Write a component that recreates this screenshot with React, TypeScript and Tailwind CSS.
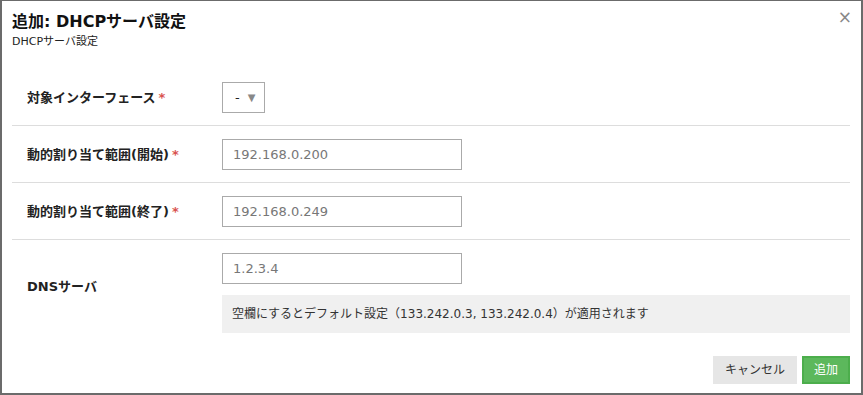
import React from 'react';

const font = { fontFamily: '"DejaVu Sans", "Noto Sans CJK JP", sans-serif' };

const Req = () => <span className="ml-[3px] text-[#d9534f]">*</span>;

const Row: React.FC<{ label: React.ReactNode; children: React.ReactNode; last?: boolean }> = ({ label, children, last }) => (
  <div className={`flex items-center pt-[13px] pb-[12px] pl-[15px] ${last ? '' : 'border-b border-[#dddddd]'}`}>
    <div className={`w-[195px] shrink-0 text-[13px] font-bold text-[#222] ${last ? 'mb-[12px]' : ''}`}>{label}</div>
    <div className="flex-1">{children}</div>
  </div>
);

const TextBox: React.FC<{ value: string }> = ({ value }) => (
  <div className="flex h-[31px] w-[240px] items-center border border-[#aaaaaa] bg-white px-[10px] text-[13px] text-[#777]">
    {value}
  </div>
);

export default function App() {
  return (
    <div className="h-[395px] w-[863px] border-2 border-t border-[#6b6b6b] bg-white" style={font}>
      <div className="relative px-[10px]">
        <div className="pt-[10px] text-[16px] font-bold leading-[22px] text-[#111]">追加: DHCPサーバ設定</div>
        <div className="mt-[1px] text-[11px] leading-[16px] text-[#222]">DHCPサーバ設定</div>
        <button className="absolute right-[9px] top-[8px] text-[17px] leading-none text-[#888]">×</button>
      </div>

      <div className="mx-[10px] mt-[19px] mr-[11px]">
        <Row label={<>対象インターフェース<Req /></>}>
          <div className="flex h-[31px] w-[43px] items-center border border-[#aaaaaa] pl-[12px] text-[13px] text-[#222]">
            <span>-</span>
            <span className="ml-[8px] text-[10px] text-[#888]">▼</span>
          </div>
        </Row>
        <Row label={<>動的割り当て範囲(開始)<Req /></>}>
          <TextBox value="192.168.0.200" />
        </Row>
        <Row label={<>動的割り当て範囲(終了)<Req /></>}>
          <TextBox value="192.168.0.249" />
        </Row>
        <Row label="DNSサーバ" last>
          <TextBox value="1.2.3.4" />
          <div className="mt-[11px] bg-[#f0f0f0] px-[10px] py-[10px] text-[12px] leading-[18px] text-[#333]">
            空欄にするとデフォルト設定（133.242.0.3, 133.242.0.4）が適用されます
          </div>
        </Row>
      </div>

      <div className="mr-[11px] mt-[11px] flex justify-end gap-[5px]">
        <button className="h-[28px] w-[84px] bg-[#e6e6e6] text-[12px] text-[#333]">キャンセル</button>
        <button className="h-[28px] w-[48px] border-2 border-[#4cae4c] bg-[#5cb85c] text-[12px] text-white">追加</button>
      </div>
    </div>
  );
}
